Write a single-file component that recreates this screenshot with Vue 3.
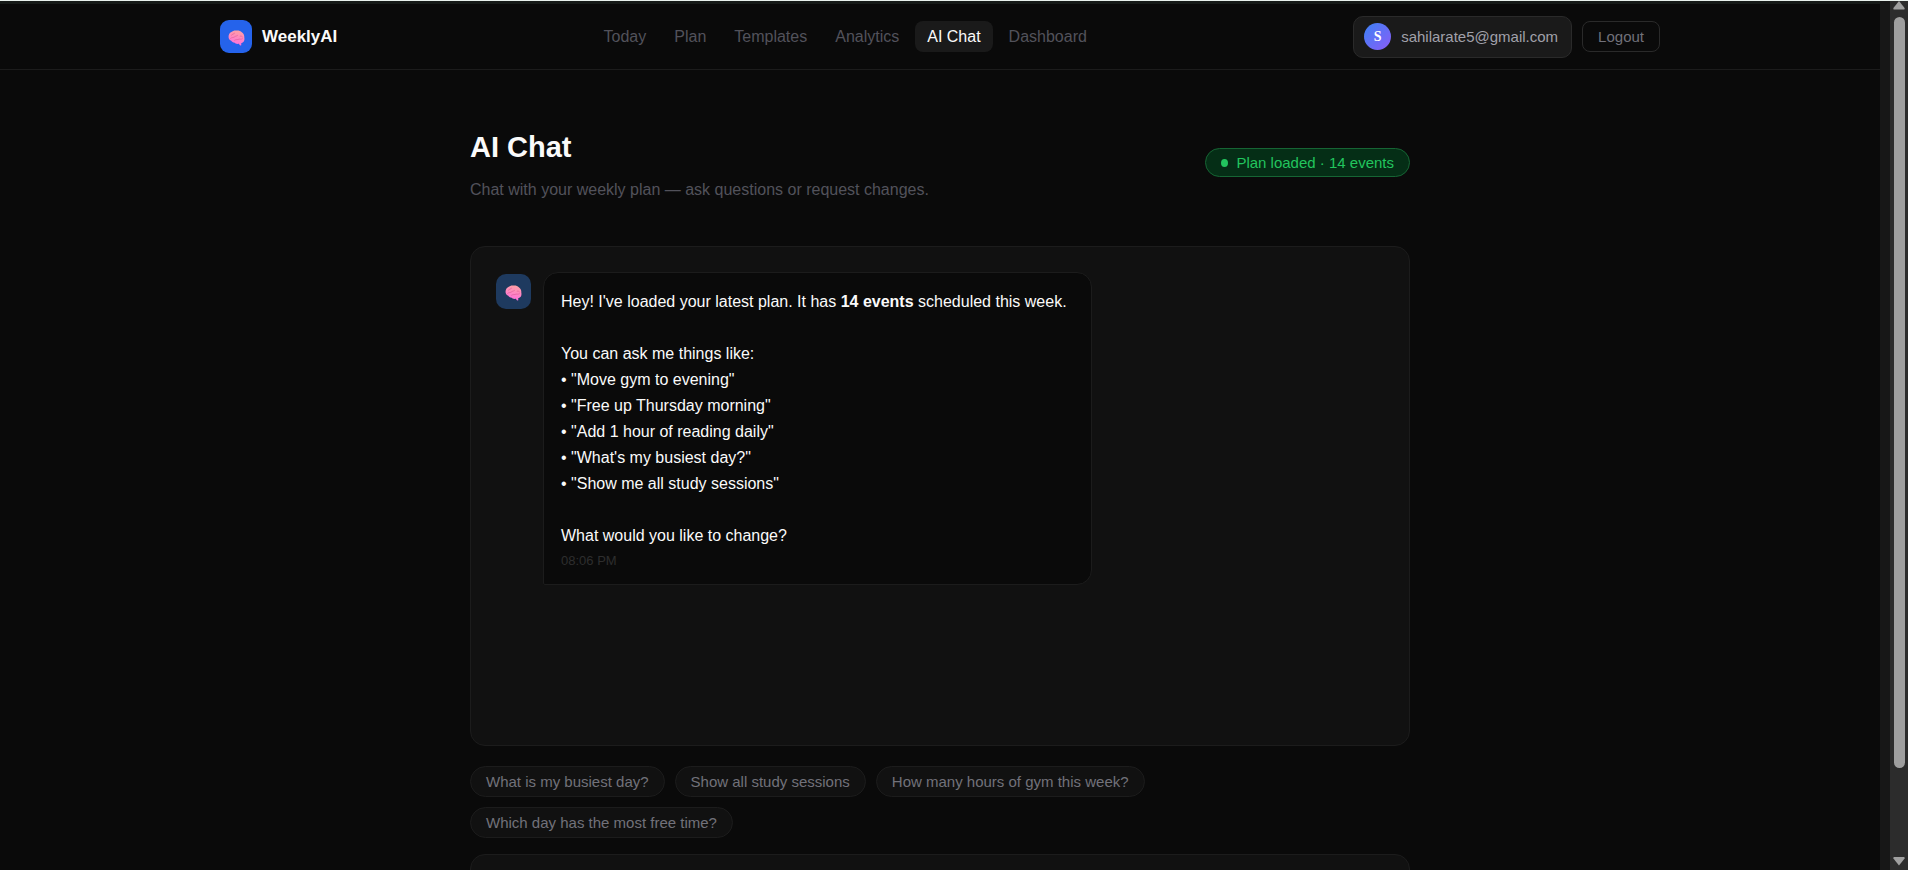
<script setup>
import { h } from 'vue'

const navItems = ['Today', 'Plan', 'Templates', 'Analytics', 'AI Chat', 'Dashboard']
const current = 'AI Chat'
const examples = [
  'Move gym to evening',
  'Free up Thursday morning',
  'Add 1 hour of reading daily',
  "What's my busiest day?",
  'Show me all study sessions',
]
const suggestions = [
  'What is my busiest day?',
  'Show all study sessions',
  'How many hours of gym this week?',
  'Which day has the most free time?',
]

const crease = (d) =>
  h('path', {
    d,
    fill: 'none',
    stroke: '#d9568f',
    'stroke-width': 0.7,
    'stroke-opacity': 0.8,
    'stroke-linecap': 'round',
  })

const BrainIcon = () =>
  h('svg', { width: 17, height: 16, viewBox: '0 0 17 16', 'aria-hidden': 'true' }, [
    h('defs', [
      h('linearGradient', { id: 'brain-fill', x1: 0.6, y1: 0, x2: 0.4, y2: 1 }, [
        h('stop', { offset: '0', 'stop-color': '#ffa0a4' }),
        h('stop', { offset: '1', 'stop-color': '#ff6ee0' }),
      ]),
    ]),
    h('path', {
      fill: 'url(#brain-fill)',
      d: 'M0.6 7.6C0.3 5 1.5 2.9 3.4 2.1C4.5 0.8 6.6 0.3 8.3 0.5C10.4 0.2 12.6 0.8 13.8 2.2C15.6 3.3 16.5 5.4 16.3 7.4C16.8 9.6 16.2 11.6 14.7 12.6C14 13 13.5 13.1 13.2 13.2L13.3 15.2L12.1 15.5L10.8 13.8C9.2 14.1 7.2 13.9 6.2 12.6C5 12.5 3.9 11.8 3.3 10.7C1.8 10.4 0.7 9.2 0.6 7.6Z',
    }),
    crease('M3.4 5.2C4.4 4 5.6 4.2 6.6 3.2'),
    crease('M2.6 8.4C4 7 5.4 8 7 6.6C8 5.8 9 6.2 9.6 5.4'),
    crease('M6.6 10.2C8 9.2 9.6 9.8 11 9.2C12.4 8.8 13 9.6 14.4 8.8'),
    crease('M12.2 6.2C13 5.8 13.8 6.2 14.4 6.8'),
  ])
</script>

<template>
  <div class="window">
    <div class="frame-top"></div>
    <div class="view">
      <div class="page">
        <header class="topbar">
          <div class="topbar-inner">
            <a href="#" class="brand">
              <span class="brand-mark"><BrainIcon /></span>
              <span>WeeklyAI</span>
            </a>
            <nav class="nav">
              <a
                v-for="item in navItems"
                :key="item"
                href="#"
                class="nav-link"
                :class="{ active: item === current }"
                >{{ item }}</a
              >
            </nav>
            <div class="account">
              <div class="user">
                <span class="user-initial">S</span>
                <span>sahilarate5@gmail.com</span>
              </div>
              <button type="button" class="logout">Logout</button>
            </div>
          </div>
        </header>

        <main class="content">
          <div class="heading">
            <div>
              <h1>AI Chat</h1>
              <p>Chat with your weekly plan — ask questions or request changes.</p>
            </div>
            <div class="status"><span class="dot"></span>Plan loaded · 14 events</div>
          </div>

          <section class="chat">
            <div class="message">
              <span class="bot"><BrainIcon /></span>
              <div class="bubble">
                <p>Hey! I've loaded your latest plan. It has <strong>14 events</strong> scheduled this week.</p>
                <div class="ask">
                  <p>You can ask me things like:</p>
                  <p v-for="text in examples" :key="text">• "{{ text }}"</p>
                </div>
                <p>What would you like to change?</p>
                <time>08:06 PM</time>
              </div>
            </div>
          </section>

          <div class="suggestions">
            <button v-for="text in suggestions" :key="text" type="button">{{ text }}</button>
          </div>

          <div class="composer"></div>
        </main>
      </div>
      <div class="gutter"></div>
      <div class="scrollbar">
        <svg width="14" height="10" viewBox="0 0 14 10" aria-hidden="true">
          <path d="M7 0L12.6 6.9Q13 8.5 12 8.5H2Q1 8.5 1.4 6.9Z" fill="#9f9f9f" />
        </svg>
        <div class="track"><div class="thumb"></div></div>
        <svg width="14" height="10" viewBox="0 0 14 10" aria-hidden="true">
          <path d="M7 9.5L12.6 2.6Q13 1 12 1H2Q1 1 1.4 2.6Z" fill="#9f9f9f" />
        </svg>
      </div>
    </div>
  </div>
</template>

<style>
body {
  margin: 0;
  background: #0a0a0a;
}
</style>

<style scoped>
* {
  box-sizing: border-box;
}
h1,
p {
  margin: 0;
}
a {
  text-decoration: none;
}
button {
  font-family: inherit;
}
.window {
  display: flex;
  flex-direction: column;
  height: 100vh;
  overflow: hidden;
  background: #0a0a0a;
  color: #fafafa;
  font-family: 'Liberation Sans', Arial, sans-serif;
  font-size: 16px;
}
.frame-top {
  flex: none;
  height: 1px;
  background: #e9f1ed;
}
.view {
  display: flex;
  flex: 1;
  min-height: 0;
}
.page {
  flex: 1;
  min-width: 0;
  overflow: hidden;
  border-top: 3px solid #161a18;
}
.gutter {
  flex: none;
  width: 10px;
  background: #171717;
}
.scrollbar {
  display: flex;
  flex: none;
  flex-direction: column;
  align-items: center;
  width: 18px;
  padding-bottom: 4px;
  background: #2c2c2c;
}
.track {
  flex: 1;
  width: 11px;
  padding: 6px 0 88px;
}
.thumb {
  height: 100%;
  border-radius: 6px;
  background: #9f9f9f;
}
.topbar {
  height: 66px;
  border-bottom: 1px solid #1c1c1c;
}
.topbar-inner {
  display: flex;
  align-items: center;
  justify-content: space-between;
  max-width: 1440px;
  height: 100%;
  margin: 0 auto;
}
.brand {
  display: flex;
  align-items: center;
  gap: 10px;
  color: #fafafa;
  font-size: 17px;
  font-weight: 700;
}
.brand-mark {
  display: flex;
  align-items: center;
  justify-content: center;
  width: 32px;
  height: 33px;
  padding-top: 2px;
  border-radius: 9px;
  background: #2563eb;
}
.nav {
  display: flex;
  gap: 4px;
}
.nav-link {
  padding: 0 12px;
  border-radius: 8px;
  color: #52525b;
  line-height: 31px;
}
.nav-link.active {
  background: #1a1a1a;
  color: #fafafa;
}
.account {
  display: flex;
  align-items: center;
  gap: 10px;
  font-size: 15px;
}
.user {
  display: flex;
  align-items: center;
  gap: 10px;
  height: 42px;
  padding: 0 13px 0 10px;
  border: 1px solid #2a2a2a;
  border-radius: 10px;
  background: #1a1a1a;
  color: #a1a1aa;
}
.user-initial {
  width: 27px;
  height: 27px;
  border-radius: 50%;
  background: linear-gradient(135deg, #3b82f6, #8b5cf6);
  color: #ffffff;
  font-family: 'Liberation Serif', 'Times New Roman', serif;
  font-size: 14px;
  font-weight: 700;
  line-height: 27px;
  text-align: center;
}
.logout {
  height: 31px;
  padding: 0 15px;
  border: 1px solid #2a2a2a;
  border-radius: 8px;
  background: transparent;
  color: #71717a;
  font-size: 15px;
}
.content {
  max-width: 940px;
  margin: 0 auto;
  padding-top: 57px;
}
.heading {
  display: flex;
  align-items: center;
  justify-content: space-between;
  margin-bottom: 48px;
}
h1 {
  margin-bottom: 15px;
  font-size: 29px;
  font-weight: 700;
  line-height: 40px;
}
.heading p {
  color: #52525b;
  line-height: 16px;
}
.status {
  display: flex;
  align-items: center;
  gap: 8px;
  height: 29px;
  padding: 0 15px;
  border: 1px solid #166534;
  border-radius: 15px;
  background: #052e16;
  color: #22c55e;
  font-size: 15px;
}
.dot {
  width: 7px;
  height: 8px;
  border-radius: 50%;
  background: #22c55e;
}
.chat {
  min-height: 500px;
  padding: 25px;
  border: 1px solid #1c1c1c;
  border-radius: 15px;
  background: #111111;
}
.message {
  display: flex;
  align-items: flex-start;
  gap: 12px;
}
.bot {
  display: flex;
  flex: none;
  align-items: center;
  justify-content: center;
  width: 35px;
  height: 35px;
  margin-top: 2px;
  padding-top: 2px;
  border-radius: 10px;
  background: #1e3a5f;
}
.bubble {
  padding: 16px 24px 15px 17px;
  border: 1px solid #1c1c1c;
  border-radius: 15px 15px 15px 2px;
  background: #0a0a0a;
  line-height: 26px;
}
.ask {
  margin: 26px 0;
}
time {
  display: block;
  margin-top: 4px;
  color: #2e2e2e;
  font-size: 13px;
  line-height: 16px;
}
.suggestions {
  display: flex;
  flex-wrap: wrap;
  gap: 10px;
  max-width: 740px;
  margin: 20px 0 16px;
}
.suggestions button {
  height: 31px;
  padding: 0 15px;
  border: 1px solid #1c1c1c;
  border-radius: 16px;
  background: #111111;
  color: #71717a;
  font-size: 15px;
}
.composer {
  height: 80px;
  border: 1px solid #1c1c1c;
  border-radius: 15px;
  background: #111111;
}
</style>
